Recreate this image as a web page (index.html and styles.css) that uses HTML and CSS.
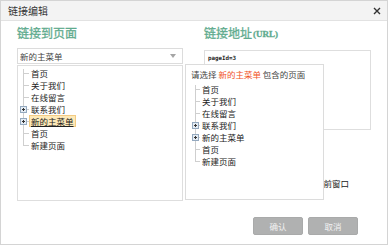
FILE: index.html
```html
<!DOCTYPE html>
<html lang="zh-CN">
<head>
  <meta charset="UTF-8" />
  <title>链接编辑</title>
  <link rel="stylesheet" href="styles.css">
</head>
<body>

  <div class="dialog">
    <div class="dialog-head">
      <span>链接编辑</span>
      <svg class="close" width="8" height="8" viewBox="0 0 8 8">
        <path d="M1 1 L7 7 M7 1 L1 7" stroke="#333" stroke-width="1.4" />
      </svg>
    </div>

    <div class="dialog-body">
      <div class="col">
        <h3>链接到页面</h3>
        <div class="select">
          <span>新的主菜单</span>
          <span class="arrow"></span>
        </div>
        <div class="tree-box">
          <ul class="tree">
            <li>首页</li>
            <li>关于我们</li>
            <li>在线留言</li>
            <li class="folder"><i class="plus"></i>联系我们</li>
            <li class="folder"><i class="plus"></i><span class="selected">新的主菜单</span></li>
            <li>首页</li>
            <li>新建页面</li>
          </ul>
        </div>
      </div>

      <div class="col">
        <h3>链接地址<small>(URL)</small></h3>
        <div class="url">pageId=3</div>
        <div class="open-row">
          <span>打开方式：</span>
          <label><i class="radio"></i>新窗口</label>
          <label class="cur"><i class="radio"></i>当前窗口</label>
        </div>
      </div>
    </div>

    <div class="dialog-foot">
      <button class="btn">确认</button>
      <button class="btn">取消</button>
    </div>

    <!-- dropdown with the pages of the chosen menu -->
    <div class="popup">
      <div class="popup-head">请选择 <em>新的主菜单</em> 包含的页面</div>
      <ul class="tree tree-pop">
        <li>首页</li>
        <li>关于我们</li>
        <li>在线留言</li>
        <li class="folder"><i class="plus"></i>联系我们</li>
        <li class="folder"><i class="plus"></i>新的主菜单</li>
        <li>首页</li>
        <li>新建页面</li>
      </ul>
    </div>
  </div>

</body>
</html>
```

FILE: styles.css
```css
body {
  margin: 0;
  font-family: "Noto Sans CJK SC", "Noto Sans", sans-serif;
  color: #333;
}
.dialog {
  position: relative;
  width: 388px;
  height: 245px;
  box-sizing: border-box;
  border: 1px solid #d4d4d4;
  background: #fff;
}
.dialog-head {
  height: 20px;
  box-sizing: border-box;
  border-bottom: 1px solid #e2e2e2;
  background: #f3f3f3;
  display: flex;
  align-items: center;
  justify-content: space-between;
  padding: 0 6px 0 7px;
  font-size: 10px;
  color: #333;
}
.dialog-body {
  display: grid;
  grid-template-columns: 166px 167px;
  column-gap: 21px;
  padding: 0 16px;
}
.col h3 {
  margin: 5px 0 8px;
  font-size: 12px;
  line-height: 14px;
  font-weight: normal;
  -webkit-text-stroke: 0.3px #5fab8e;
  color: #5fab8e;
}
.col h3 small {
  font-family: "Liberation Serif", serif;
  font-size: 9px;
  font-weight: bold;
  margin-left: 1px;
  position: relative;
  top: -1px;
}
.select {
  height: 16px;
  box-sizing: border-box;
  border: 1px solid #dcdcdc;
  display: flex;
  align-items: center;
  justify-content: space-between;
  padding: 0 6px 0 2px;
  font-size: 8.5px;
  color: #444;
}
.arrow {
  width: 0;
  height: 0;
  border-left: 3px solid transparent;
  border-right: 3px solid transparent;
  border-top: 4px solid #a5a5a5;
}
.tree-box {
  margin-top: 1px;
  height: 136px;
  box-sizing: border-box;
  border: 1px solid #dedede;
}
.tree {
  list-style: none;
  margin: 0;
  padding: 1px 0 0 13px;
  font-size: 8.5px;
  line-height: 12px;
  color: #222;
}
.tree li {
  position: relative;
  height: 12px;
  white-space: nowrap;
}
.tree li::before {
  content: "";
  position: absolute;
  left: -8px;
  top: 0;
  bottom: 0;
  border-left: 1px solid #cfcfcf;
}
.tree li:first-child::before {
  top: 2px;
}
.tree li:last-child::before {
  bottom: 6px;
}
.tree li::after {
  content: "";
  position: absolute;
  left: -8px;
  top: 6px;
  width: 6px;
  border-top: 1px solid #cfcfcf;
}
.plus {
  position: absolute;
  z-index: 1;
  left: -11px;
  top: 3px;
  width: 5px;
  height: 5px;
  border: 1px solid #94a9bf;
  background:
    linear-gradient(#333, #333) center / 3px 1px no-repeat,
    linear-gradient(#333, #333) center / 1px 3px no-repeat,
    #e4ecf4;
}
.selected {
  display: inline-block;
  margin-left: -2px;
  padding: 0 1px;
  line-height: 10px;
  border: 1px solid #f3cb82;
  background: #fde9b8;
  text-decoration: underline;
}
.url {
  height: 80px;
  box-sizing: border-box;
  border: 1px solid #dedede;
  padding: 4px 3px;
  font-family: "DejaVu Sans Mono", monospace;
  font-size: 5.8px;
  font-weight: bold;
  color: #222;
}
.open-row {
  margin-top: 47px;
  display: flex;
  align-items: center;
  gap: 6px;
  font-size: 8.5px;
  line-height: 12px;
  color: #222;
}
.open-row label {
  display: flex;
  align-items: center;
  gap: 2px;
}
.open-row .cur {
  margin-left: 9px;
}
.radio {
  width: 7px;
  height: 7px;
  border: 1px solid #999;
  border-radius: 50%;
}
.dialog-foot {
  display: flex;
  justify-content: flex-end;
  gap: 5px;
  padding: 16px 29px 0 0;
}
.btn {
  width: 50px;
  height: 18px;
  border: 1px solid #a9aaaa;
  border-radius: 2px;
  background: #b0b1b1;
  color: #f2f2f2;
  font-family: inherit;
  font-size: 8.5px;
  padding: 0;
}
.popup {
  position: absolute;
  left: 184px;
  top: 63px;
  width: 139px;
  height: 136px;
  box-sizing: border-box;
  border: 1px solid #dcdcdc;
  background: #fff;
  padding-top: 1px;
}
.popup-head {
  padding-left: 5px;
  font-size: 8.5px;
  line-height: 16px;
  color: #444;
  white-space: nowrap;
}
.popup-head em {
  font-style: normal;
  color: #f1531f;
}
.tree-pop {
  margin-top: 1px;
  padding: 0 0 0 16px;
}
.tree-pop li::before,
.tree-pop li::after {
  left: -7px;
}
.tree-pop li::after {
  width: 5px;
}
.tree-pop .plus {
  left: -10px;
}
```
